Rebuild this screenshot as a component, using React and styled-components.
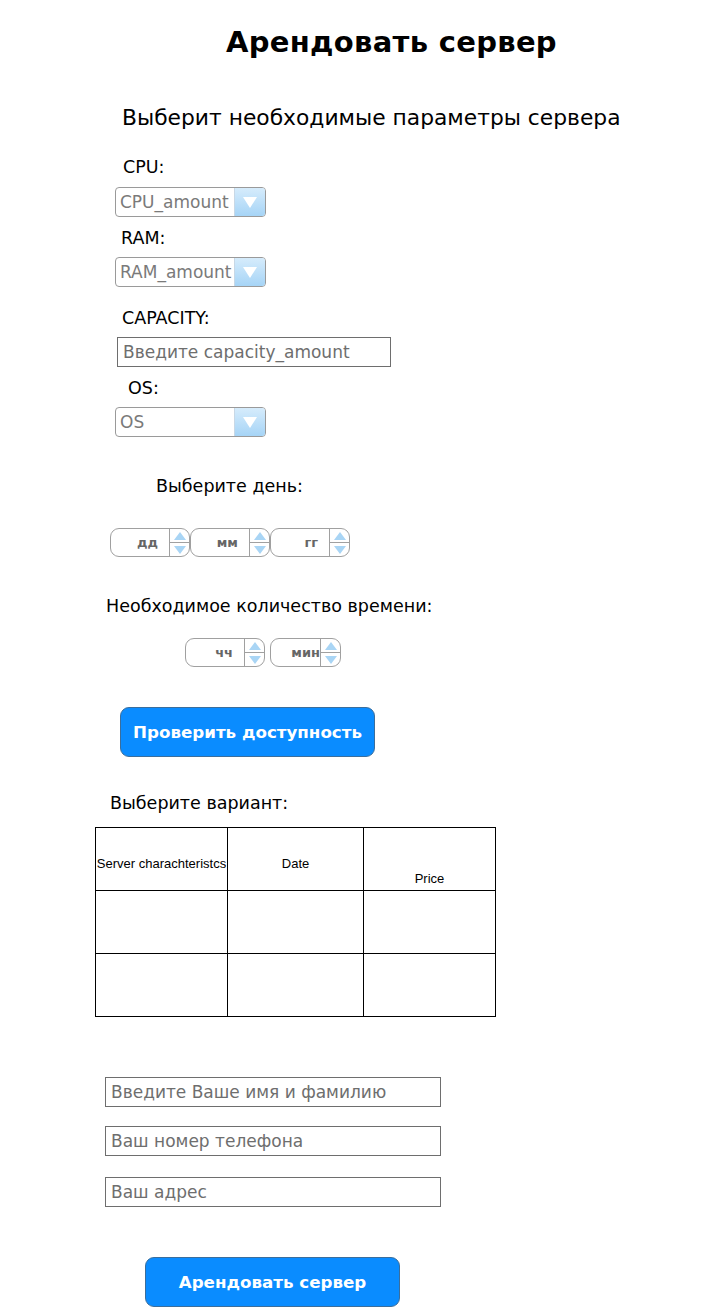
import React from "react";
import styled, { createGlobalStyle } from "styled-components";

const GlobalStyle = createGlobalStyle`
  body {
    margin: 0;
    background: #fff;
    font-family: "DejaVu Sans", Verdana, sans-serif;
    color: #000;
  }
`;

const Page = styled.div`
  width: 716px;
  min-height: 1308px;
  display: flex;
  flex-direction: column;
  align-items: flex-start;
`;

const Block = styled.div`
  margin-top: ${(p) => p.$top}px;
  margin-left: ${(p) => p.$left}px;
`;

const Title = styled.h1`
  margin: 0;
  font-family: "DejaVu Sans", sans-serif;
  font-weight: bold;
  font-size: 29px;
  line-height: 42px;
  letter-spacing: 0.3px;
`;

const Subtitle = styled.div`
  font-family: "DejaVu Sans", sans-serif;
  font-size: 21.8px;
  line-height: 30px;
`;

const Label = styled.div`
  font-size: 17.5px;
  line-height: 20px;
  white-space: nowrap;
`;

const SelectBox = styled.div`
  width: 151px;
  height: 30px;
  box-sizing: border-box;
  border: 1px solid #9a9a9a;
  border-radius: 4px;
  display: flex;
  overflow: hidden;
  background: #fff;
`;

const SelectText = styled.span`
  flex: 1;
  padding-left: 4px;
  font-size: 17px;
  line-height: 28px;
  color: #7a7a7a;
  white-space: nowrap;
  overflow: hidden;
`;

const SelectArrow = styled.span`
  flex: 0 0 30px;
  border-left: 1px solid #c8d8e6;
  background: linear-gradient(#d6ecfc, #a6d4f6);
  display: flex;
  align-items: center;
  justify-content: center;

  &::after {
    content: "";
    border-left: 7px solid transparent;
    border-right: 7px solid transparent;
    border-top: 11px solid #fff;
  }
`;

const TextInput = styled.div`
  width: ${(p) => p.$width}px;
  height: 30px;
  box-sizing: border-box;
  border: 1px solid #6e6e6e;
  padding-left: 5px;
  font-size: 17px;
  line-height: 28px;
  color: #6e6e6e;
  white-space: nowrap;
`;

const SpinRow = styled.div`
  display: flex;
  gap: ${(p) => p.$gap}px;
`;

const Spinner = styled.div`
  width: ${(p) => p.$width}px;
  height: 29px;
  box-sizing: border-box;
  border: 1px solid #a0a0a0;
  border-radius: 9px;
  display: flex;
  overflow: hidden;
  background: #fff;
`;

const SpinValue = styled.span`
  flex: 1;
  text-align: right;
  padding-right: ${(p) => p.$pad}px;
  font-size: 13px;
  font-weight: bold;
  line-height: 27px;
  color: #666;
  white-space: nowrap;
`;

const SpinButtons = styled.span`
  flex: 0 0 19px;
  border-left: 1px solid #a0a0a0;
  display: flex;
  flex-direction: column;
`;

const SpinHalf = styled.span`
  flex: 1;
  display: flex;
  align-items: center;
  justify-content: center;
  border-top: ${(p) => (p.$down ? "1px solid #a0a0a0" : "none")};

  &::after {
    content: "";
    border-left: 6px solid transparent;
    border-right: 6px solid transparent;
    ${(p) =>
      p.$down
        ? "border-top: 8px solid #a9d5f5;"
        : "border-bottom: 8px solid #a9d5f5;"}
  }
`;

const Button = styled.button`
  width: 255px;
  height: 50px;
  box-sizing: border-box;
  border: 1px solid #3b6e9c;
  border-radius: 9px;
  background: #0a8cff;
  color: #fff;
  font-family: "DejaVu Sans", Verdana, sans-serif;
  font-weight: bold;
  font-size: 16.7px;
  cursor: pointer;
`;

const Table = styled.table`
  width: 400px;
  border-collapse: collapse;
  font-family: "Liberation Sans", Arial, sans-serif;
  font-size: 13px;
  table-layout: fixed;

  td, th {
    border: 1px solid #000;
    padding: 0;
  }
`;

const HeadCell = styled.th`
  height: 62px;
  font-weight: normal;
  text-align: center;
  vertical-align: top;
  white-space: nowrap;
  overflow: hidden;
`;

const HeadText = styled.div`
  padding-top: ${(p) => p.$pt}px;
  line-height: 15px;
`;

const BodyCell = styled.td`
  height: 62px;
`;

function Select({ value }) {
  return (
    <SelectBox>
      <SelectText>{value}</SelectText>
      <SelectArrow />
    </SelectBox>
  );
}

function NumberSpinner({ value, width = 80, pad = 11 }) {
  return (
    <Spinner $width={width}>
      <SpinValue $pad={pad}>{value}</SpinValue>
      <SpinButtons>
        <SpinHalf />
        <SpinHalf $down />
      </SpinButtons>
    </Spinner>
  );
}

export default function App() {
  return (
    <Page>
      <GlobalStyle />
      <Block $top={21} $left={226}>
        <Title>Арендовать сервер</Title>
      </Block>
      <Block $top={40} $left={122}>
        <Subtitle>Выберит необходимые параметры сервера</Subtitle>
      </Block>

      <Block $top={24} $left={123}><Label>CPU:</Label></Block>
      <Block $top={10} $left={115}><Select value="CPU_amount" /></Block>

      <Block $top={11} $left={121}><Label>RAM:</Label></Block>
      <Block $top={9} $left={115}><Select value="RAM_amount" /></Block>

      <Block $top={21} $left={122}><Label>CAPACITY:</Label></Block>
      <Block $top={9} $left={117}>
        <TextInput $width={274}>Введите capacity_amount</TextInput>
      </Block>

      <Block $top={11} $left={128}><Label>OS:</Label></Block>
      <Block $top={9} $left={115}><Select value="OS" /></Block>

      <Block $top={39} $left={156}><Label>Выберите день:</Label></Block>
      <Block $top={32} $left={110}>
        <SpinRow $gap={0}>
          <NumberSpinner value="дд" />
          <NumberSpinner value="мм" />
          <NumberSpinner value="гг" />
        </SpinRow>
      </Block>

      <Block $top={39} $left={106}><Label>Необходимое количество времени:</Label></Block>
      <Block $top={22} $left={185}>
        <SpinRow $gap={5}>
          <NumberSpinner value="чч" />
          <NumberSpinner value="мин" width={71} pad={0} />
        </SpinRow>
      </Block>

      <Block $top={40} $left={120}>
        <Button>Проверить доступность</Button>
      </Block>

      <Block $top={36} $left={110}><Label>Выберите вариант:</Label></Block>
      <Block $top={14} $left={95}>
        <Table>
          <colgroup>
            <col style={{ width: 132 }} />
            <col style={{ width: 136 }} />
            <col style={{ width: 132 }} />
          </colgroup>
          <thead>
            <tr>
              <HeadCell><HeadText $pt={28}>Server charachteristcs</HeadText></HeadCell>
              <HeadCell><HeadText $pt={28}>Date</HeadText></HeadCell>
              <HeadCell><HeadText $pt={43}>Price</HeadText></HeadCell>
            </tr>
          </thead>
          <tbody>
            <tr><BodyCell /><BodyCell /><BodyCell /></tr>
            <tr><BodyCell /><BodyCell /><BodyCell /></tr>
          </tbody>
        </Table>
      </Block>

      <Block $top={60} $left={105}>
        <TextInput $width={336}>Введите Ваше имя и фамилию</TextInput>
      </Block>
      <Block $top={19} $left={105}>
        <TextInput $width={336}>Ваш номер телефона</TextInput>
      </Block>
      <Block $top={21} $left={105}>
        <TextInput $width={336}>Ваш адрес</TextInput>
      </Block>

      <Block $top={50} $left={145}>
        <Button>Арендовать сервер</Button>
      </Block>
    </Page>
  );
}
